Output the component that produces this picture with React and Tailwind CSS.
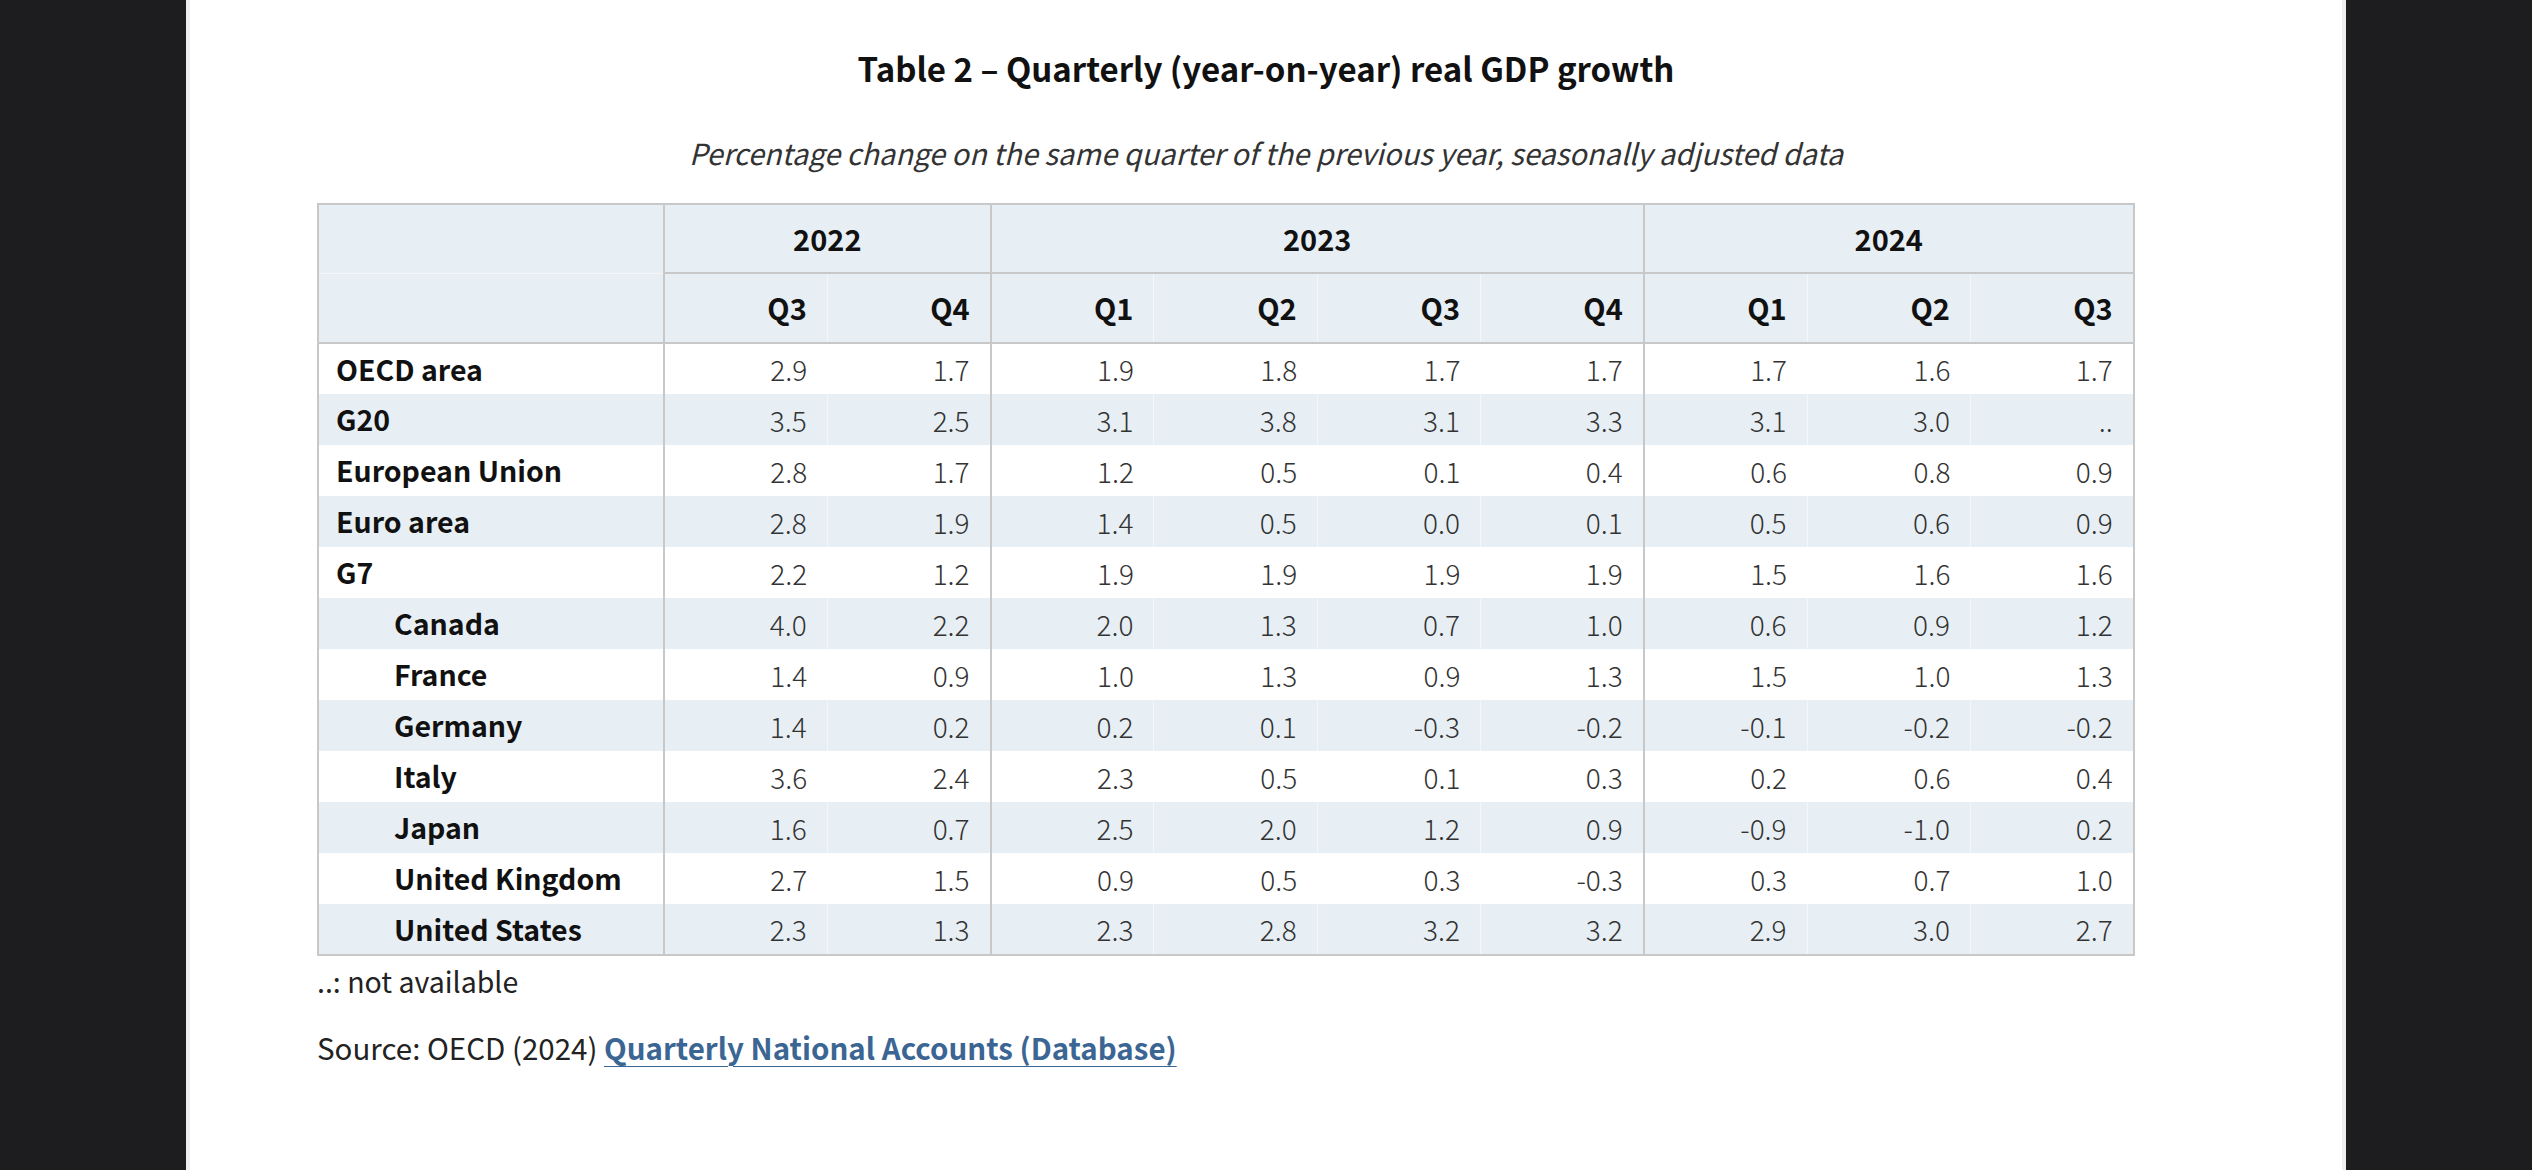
const groups = [
  { year: '2022', quarters: ['Q3', 'Q4'] },
  { year: '2023', quarters: ['Q1', 'Q2', 'Q3', 'Q4'] },
  { year: '2024', quarters: ['Q1', 'Q2', 'Q3'] },
];

const rows = [
  { name: 'OECD area', values: ['2.9', '1.7', '1.9', '1.8', '1.7', '1.7', '1.7', '1.6', '1.7'] },
  { name: 'G20', values: ['3.5', '2.5', '3.1', '3.8', '3.1', '3.3', '3.1', '3.0', '..'] },
  { name: 'European Union', values: ['2.8', '1.7', '1.2', '0.5', '0.1', '0.4', '0.6', '0.8', '0.9'] },
  { name: 'Euro area', values: ['2.8', '1.9', '1.4', '0.5', '0.0', '0.1', '0.5', '0.6', '0.9'] },
  { name: 'G7', values: ['2.2', '1.2', '1.9', '1.9', '1.9', '1.9', '1.5', '1.6', '1.6'] },
  { name: 'Canada', indent: true, values: ['4.0', '2.2', '2.0', '1.3', '0.7', '1.0', '0.6', '0.9', '1.2'] },
  { name: 'France', indent: true, values: ['1.4', '0.9', '1.0', '1.3', '0.9', '1.3', '1.5', '1.0', '1.3'] },
  { name: 'Germany', indent: true, values: ['1.4', '0.2', '0.2', '0.1', '-0.3', '-0.2', '-0.1', '-0.2', '-0.2'] },
  { name: 'Italy', indent: true, values: ['3.6', '2.4', '2.3', '0.5', '0.1', '0.3', '0.2', '0.6', '0.4'] },
  { name: 'Japan', indent: true, values: ['1.6', '0.7', '2.5', '2.0', '1.2', '0.9', '-0.9', '-1.0', '0.2'] },
  { name: 'United Kingdom', indent: true, values: ['2.7', '1.5', '0.9', '0.5', '0.3', '-0.3', '0.3', '0.7', '1.0'] },
  { name: 'United States', indent: true, values: ['2.3', '1.3', '2.3', '2.8', '3.2', '3.2', '2.9', '3.0', '2.7'] },
];

// columns that start a new year group get the grey rule on their left
const groupStarts = [0, 2, 6];

export default function App() {
  const quarters = groups.flatMap((g) => g.quarters);

  return (
    <div className="min-h-screen bg-[#1d1d1f] font-['Noto_Sans_CJK_JP','Noto_Sans',sans-serif]">
      <div className="mx-auto min-h-screen w-[2160px] border-x-4 border-[#eeeeee] bg-white pb-24">
        <h1 className="pt-[45px] text-center text-[33px] font-bold leading-[46px] text-[#111]">
          Table 2 – Quarterly (year-on-year) real GDP growth
        </h1>
        <p className="mt-[42px] text-center text-[29px] italic leading-[38px] text-[#333]">
          Percentage change on the same quarter of the previous year, seasonally adjusted data
        </p>

        <div className="mt-[32px] pl-[127px]">
          <table className="w-[1816px] table-fixed border-collapse border-2 border-[#c8c8c8] text-[28px]">
            <colgroup>
              <col className="w-[346px]" />
              {quarters.map((q, i) => (
                <col key={i} className="w-[163.3px]" />
              ))}
            </colgroup>
            <thead>
              <tr className="h-[69px] bg-[#e7eff5]">
                <th className="border-b border-[#f3f7fa]" />
                {groups.map((g) => (
                  <th
                    key={g.year}
                    colSpan={g.quarters.length}
                    className="border-b-2 border-l-2 border-[#c8c8c8] text-center text-[29px] font-bold text-[#111]"
                  >
                    {g.year}
                  </th>
                ))}
              </tr>
              <tr className="h-[70px] bg-[#e7eff5]">
                <th className="border-b-2 border-[#c8c8c8]" />
                {quarters.map((q, i) => (
                  <th
                    key={i}
                    className={
                      groupStarts.includes(i)
                        ? 'border-b-2 border-l-2 border-[#c8c8c8] pr-5 text-right text-[29px] font-bold text-[#111]'
                        : 'border-b-2 border-l border-b-[#c8c8c8] border-l-[#f3f7fa] pr-5 text-right text-[29px] font-bold text-[#111]'
                    }
                  >
                    {q}
                  </th>
                ))}
              </tr>
            </thead>
            <tbody>
              {rows.map((row, r) => (
                <tr key={row.name} className={r % 2 === 1 ? 'h-[51px] bg-[#e7eff5]' : 'h-[51px] bg-white'}>
                  <td
                    className={
                      row.indent
                        ? 'py-0 pl-[75px] text-left text-[28.5px] font-bold leading-none text-[#111]'
                        : 'py-0 pl-[17px] text-left text-[28.5px] font-bold leading-none text-[#111]'
                    }
                  >
                    {row.name}
                  </td>
                  {row.values.map((v, i) => (
                    <td
                      key={i}
                      className={
                        groupStarts.includes(i)
                          ? 'border-l-2 border-[#c8c8c8] py-0 pr-5 text-right font-light leading-none text-[#333]'
                          : r % 2 === 1
                            ? 'border-l border-[#f3f7fa] py-0 pr-5 text-right font-light leading-none text-[#333]'
                            : 'py-0 pr-5 text-right font-light leading-none text-[#333]'
                      }
                    >
                      {v}
                    </td>
                  ))}
                </tr>
              ))}
            </tbody>
          </table>

          <p className="mt-[7px] text-[28.5px] leading-[36px] text-[#222]">..: not available</p>
          <p className="mt-[30px] text-[29.5px] leading-[36px] text-[#222]">
            Source: OECD (2024){' '}
            <a
              href="#"
              className="font-semibold text-[#3b6693] underline decoration-1 underline-offset-[6px]"
            >
              Quarterly National Accounts (Database)
            </a>
          </p>
        </div>
      </div>
    </div>
  );
}
